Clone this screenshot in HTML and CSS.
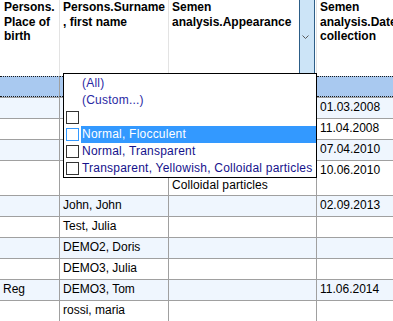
FILE: index.html
```html
<!DOCTYPE html>
<html>
  <head>
    <title>Semen analysis</title>
    <link rel="stylesheet" href="styles.css">
  </head>
  <body>
    <div class="grid">
      <div class="row head">
        <div class="cell c1">Persons.<br>Place of<br>birth</div>
        <div class="cell c2">Persons.Surname<br>, first name</div>
        <div class="cell c3">
          <span class="head-text">Semen<br>analysis.Appearance</span>
          <span class="filter-btn">
            <svg width="7" height="4" viewBox="0 0 7 4"><path d="M0.5 0.5 L3.5 3.5 L6.5 0.5" fill="none" stroke="#5a5a5a" stroke-width="1"/></svg>
          </span>
        </div>
        <div class="cell c4">Semen<br>analysis.Date<br>collection</div>
      </div>

      <div class="row sel">
        <div class="cell c1"></div>
        <div class="cell c2"></div>
        <div class="cell c3"></div>
        <div class="cell c4"></div>
      </div>
      <div class="row alt">
        <div class="cell c1"></div>
        <div class="cell c2"></div>
        <div class="cell c3"></div>
        <div class="cell c4">01.03.2008</div>
      </div>
      <div class="row">
        <div class="cell c1"></div>
        <div class="cell c2"></div>
        <div class="cell c3"></div>
        <div class="cell c4">11.04.2008</div>
      </div>
      <div class="row alt">
        <div class="cell c1"></div>
        <div class="cell c2"></div>
        <div class="cell c3"></div>
        <div class="cell c4">07.04.2010</div>
      </div>
      <div class="row tall">
        <div class="cell c1"></div>
        <div class="cell c2"></div>
        <div class="cell c3"><br>Colloidal particles</div>
        <div class="cell c4">10.06.2010</div>
      </div>
      <div class="row alt">
        <div class="cell c1"></div>
        <div class="cell c2">John, John</div>
        <div class="cell c3"></div>
        <div class="cell c4">02.09.2013</div>
      </div>
      <div class="row">
        <div class="cell c1"></div>
        <div class="cell c2">Test, Julia</div>
        <div class="cell c3"></div>
        <div class="cell c4"></div>
      </div>
      <div class="row alt">
        <div class="cell c1"></div>
        <div class="cell c2">DEMO2, Doris</div>
        <div class="cell c3"></div>
        <div class="cell c4"></div>
      </div>
      <div class="row">
        <div class="cell c1"></div>
        <div class="cell c2">DEMO3, Julia</div>
        <div class="cell c3"></div>
        <div class="cell c4"></div>
      </div>
      <div class="row alt">
        <div class="cell c1">Reg</div>
        <div class="cell c2">DEMO3, Tom</div>
        <div class="cell c3"></div>
        <div class="cell c4">11.06.2014</div>
      </div>
      <div class="row">
        <div class="cell c1"></div>
        <div class="cell c2">rossi, maria</div>
        <div class="cell c3"></div>
        <div class="cell c4"></div>
      </div>

      <!-- filter dropdown of the Appearance column -->
      <div class="filter-popup">
        <div class="opt"><span class="opt-label special">(All)</span></div>
        <div class="opt"><span class="opt-label special">(Custom...)</span></div>
        <div class="opt"><span class="box"></span><span class="opt-label"></span></div>
        <div class="opt hl"><span class="box"></span><span class="opt-label">Normal, Flocculent</span></div>
        <div class="opt"><span class="box"></span><span class="opt-label">Normal, Transparent</span></div>
        <div class="opt"><span class="box"></span><span class="opt-label">Transparent, Yellowish, Colloidal particles</span></div>
      </div>
    </div>
  </body>
</html>
```

FILE: styles.css
```css
body {
  margin: 0;
  font-family: "Liberation Sans", Arial, sans-serif;
  font-size: 12px;
  color: #000;
  background: #fff;
  overflow: hidden;
}
.grid {
  position: relative;
  width: 393px;
  overflow: hidden;
}
.row {
  display: flex;
  border-bottom: 1px solid #a0a0a0;
}
.cell {
  box-sizing: border-box;
  flex: none;
  min-height: 20px;
  padding: 2px 3px;
  line-height: 15px;
  border-right: 1px solid #a0a0a0;
}
.c1 {
  width: 60px;
}
.c2 {
  width: 109px;
}
.c3 {
  width: 148px;
  letter-spacing: 0.1px;
}
.c4 {
  width: 76px;
  border-right: none;
  white-space: nowrap;
}
.tall .cell {
  min-height: 34px;
}
.alt {
  background: #eff6fe;
}
.sel .cell {
  min-height: 21px;
  padding-top: 1px;
  background: #a9c9f0;
  border-top: 1px dotted #1a1a1a;
  border-bottom: 1px dotted #1a1a1a;
}
.head {
  height: 76px;
  border-bottom: none;
}
.head .cell {
  height: 76px;
  padding: 0 3px;
  font-weight: bold;
  line-height: 14.5px;
  border-right-color: #e3e3e3;
}
.head .c1 {
  padding-left: 4px;
}
.head .c3 {
  display: flex;
  padding-right: 0;
  letter-spacing: 0;
}
.head .c4 {
  overflow: hidden;
}
.head-text {
  flex: 1;
}
.filter-btn {
  box-sizing: border-box;
  width: 16px;
  height: 74px;
  margin-right: 1px;
  padding-left: 2px;
  display: flex;
  align-items: center;
  background: #cce4f7;
  border: 1px solid #2c5d87;
  border-top: none;
}
.filter-popup {
  position: absolute;
  left: 63px;
  top: 73px;
  box-sizing: border-box;
  width: 254px;
  height: 105px;
  padding-top: 1px;
  background: #fff;
  border: 1px solid #000;
}
.opt {
  display: flex;
  align-items: center;
  height: 17px;
}
.box {
  box-sizing: border-box;
  flex: none;
  width: 13px;
  height: 13px;
  margin: 0 2px;
  border: 1px solid #333;
  background: #fff;
}
.opt-label {
  flex: 1;
  height: 17px;
  line-height: 17px;
  padding-left: 1px;
  color: #15128c;
  letter-spacing: 0.22px;
  white-space: nowrap;
}
.opt-label.special {
  margin-left: 17px;
  color: #2a28a4;
}
.hl .opt-label {
  background: #3399ff;
  color: #fff;
}
.hl .box {
  border-color: #3399ff;
}
```
